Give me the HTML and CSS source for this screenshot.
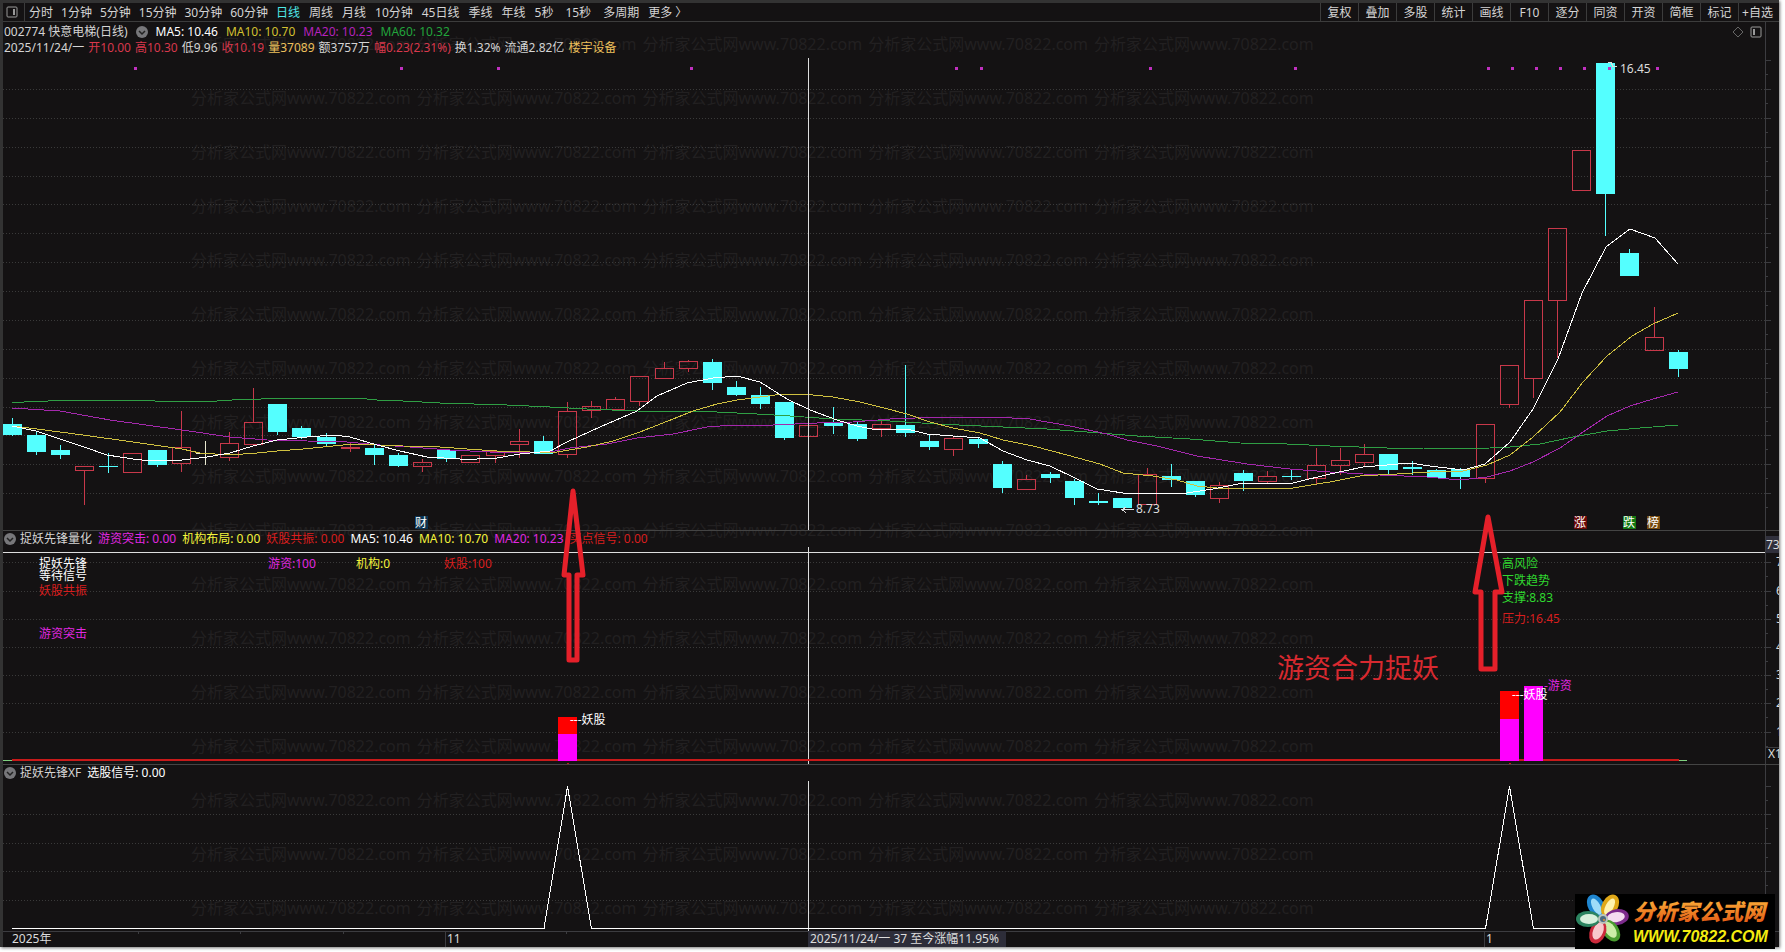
FILE: index.html
```html
<!DOCTYPE html>
<html lang="zh-CN">
<head>
  <meta charset="UTF-8">
  <meta name="viewport" content="width=device-width, initial-scale=1.0">
  <title>快意电梯 日线</title>
  <link rel="stylesheet" href="styles.css">
</head>
<body>
  <main class="app">
    <div class="watermark" aria-hidden="true"></div>

    <nav class="toolbar">
      <button class="toggle" aria-label="侧栏">
        <svg width="12" height="12" viewBox="0 0 12 12"><rect x="1" y="1" width="10" height="10" rx="1" fill="none" stroke="#999"/><rect x="7" y="3" width="2" height="6" fill="#999"/></svg>
      </button>
      <div class="periods">
        <button>分时</button>
        <button>1分钟</button>
        <button>5分钟</button>
        <button>15分钟</button>
        <button>30分钟</button>
        <button>60分钟</button>
        <button class="active">日线</button>
        <button>周线</button>
        <button>月线</button>
        <button>10分钟</button>
        <button>45日线</button>
        <button>季线</button>
        <button>年线</button>
        <button class="seconds">5秒</button>
        <button class="seconds">15秒</button>
        <button>多周期</button>
        <button>更多 〉</button>
      </div>
      <div class="tools">
        <button>复权</button>
        <button>叠加</button>
        <button>多股</button>
        <button>统计</button>
        <button>画线</button>
        <button>F10</button>
        <button>逐分</button>
        <button>同资</button>
        <button>开资</button>
        <button>简框</button>
        <button>标记</button>
        <button>+自选</button>
      </div>
    </nav>

    <section class="panel">
      <header class="head head-main">
        <div class="row">
          <span>002774 快意电梯(日线)</span>
          <button class="fold" aria-label="展开"><svg width="12" height="12" viewBox="0 0 12 12"><circle cx="6" cy="6" r="6" fill="#77777a"/><path d="M3 5l3 3 3-3" fill="none" stroke="#222" stroke-width="1.5"/></svg></button>
          <span class="white">MA5: 10.46</span>
          <span class="gold">MA10: 10.70</span>
          <span class="purple">MA20: 10.23</span>
          <span class="green">MA60: 10.32</span>
          <span class="corner">
            <svg width="12" height="12" viewBox="0 0 12 12"><path d="M6 1l5 5-5 5-5-5z" fill="none" stroke="#666"/></svg>
            <svg width="12" height="12" viewBox="0 0 12 12"><rect x="1" y="1" width="10" height="10" rx="1" fill="none" stroke="#999"/><rect x="3" y="3" width="2" height="6" fill="#999"/></svg>
          </span>
        </div>
        <div class="row quote">
          <span>2025/11/24/一</span>
          <span class="up">开10.00</span>
          <span class="up">高10.30</span>
          <span>低9.96</span>
          <span class="up">收10.19</span>
          <span class="amber">量37089</span>
          <span>额3757万</span>
          <span class="up">幅0.23(2.31%)</span>
          <span>换1.32%</span>
          <span>流通2.82亿</span>
          <span class="amber">楼宇设备</span>
        </div>
      </header>
      <svg class="plot" viewBox="3 56 1776 474">
        <g id="grid1"></g>
        <g id="candles"></g>
        <g id="lines"></g>
        <g id="dots"></g>
        <path class="cross" d="M808.5 58V530"/>
        <path class="mark" d="M1608 62.5H1611L1613 66.5H1617"/>
        <text x="1620" y="73">16.45</text>
        <path class="mark" d="M1134 509.5H1122M1126 512.5L1122 509.5L1126 507"/>
        <text x="1136" y="513">8.73</text>
        <g class="tags">
          <rect x="415" y="516" width="13" height="13" fill="#0b3352"/>
          <text x="415" y="527" fill="#c8ecff">财</text>
          <rect x="1574" y="516" width="13" height="13" fill="#6a0808"/>
          <text x="1574" y="527">涨</text>
          <rect x="1623" y="516" width="13" height="13" fill="#127812"/>
          <text x="1623" y="527">跌</text>
          <rect x="1647" y="516" width="13" height="13" fill="#74480c"/>
          <text x="1647" y="527">榜</text>
        </g>
      </svg>
    </section>

    <section class="panel front">
      <header class="head row">
        <button class="fold" aria-label="展开"><svg width="12" height="12" viewBox="0 0 12 12"><circle cx="6" cy="6" r="6" fill="#77777a"/><path d="M3 5l3 3 3-3" fill="none" stroke="#222" stroke-width="1.5"/></svg></button>
        <span class="name">捉妖先锋量化</span>
        <span class="magenta">游资突击: 0.00</span>
        <span class="yellow">机构布局: 0.00</span>
        <span class="red">妖股共振: 0.00</span>
        <span class="white">MA5: 10.46</span>
        <span class="yellow">MA10: 10.70</span>
        <span class="magenta">MA20: 10.23</span>
        <span class="red">买点信号: 0.00</span>
      </header>
      <svg class="plot" viewBox="3 547 1776 217">
        <g id="grid2"></g>
        <path class="cross" d="M808.5 547V764M3 552.5H1765"/>

        <rect x="1766" y="536" width="13" height="17" fill="#30303c"/>
        <text x="1766" y="549">73</text>
        <g id="scale"></g>
        <path class="axis" d="M1765 747.5H1779"/>
        <text x="1768" y="758">X1</text>

        <path d="M3 760.5H12M1679 760.5H1687" stroke="#7fd07f"/>
        <path d="M12 760H1679" stroke="#c81a1a" stroke-width="2"/>
        <path d="M567 763.5h2M1509 763.5h2" stroke="#c01a1a"/>
        <rect x="558" y="717" width="19" height="17" fill="#f00"/>
        <rect x="558" y="734" width="19" height="27" fill="#f0f"/>
        <rect x="1500" y="691" width="19" height="28" fill="#f00"/>
        <rect x="1500" y="719" width="19" height="42" fill="#f0f"/>
        <rect x="1524" y="686" width="19" height="75" fill="#f0f"/>

        <g class="signal">
          <text x="39" y="568">捉妖先锋</text>
          <text x="39" y="580">等待信号</text>
          <text class="red" x="39" y="595">妖股共振</text>
          <text class="magenta" x="39" y="638">游资突击</text>
          <text class="magenta" x="268" y="568">游资:100</text>
          <text class="yellow" x="356" y="568">机构:0</text>
          <text class="red" x="444" y="568">妖股:100</text>
          <text x="570" y="724">---妖股</text>
          <text class="magenta" x="1544" y="690">-游资</text>
          <text x="1512" y="699">---妖股</text>
          <text class="lime" x="1502" y="568">高风险</text>
          <text class="lime" x="1502" y="585">下跌趋势</text>
          <text class="lime" x="1502" y="602">支撑:8.83</text>
          <text class="red" x="1502" y="623">压力:16.45</text>
        </g>
        <text class="note" x="1277" y="678">游资合力捉妖</text>
        <path class="arrow" d="M573 491L564 575H569V660H577V575H583Z"/>
        <path class="arrow" d="M1488 517L1475 592H1481V669H1495V592H1502Z"/>
      </svg>
    </section>

    <section class="panel last">
      <header class="head row">
        <button class="fold" aria-label="展开"><svg width="12" height="12" viewBox="0 0 12 12"><circle cx="6" cy="6" r="6" fill="#77777a"/><path d="M3 5l3 3 3-3" fill="none" stroke="#222" stroke-width="1.5"/></svg></button>
        <span class="name">捉妖先锋XF</span>
        <span class="white">选股信号: 0.00</span>
      </header>
      <svg class="plot" viewBox="3 781 1776 150">
        <g id="grid3"></g>
        <path class="cross" d="M808.5 781V931"/>
        <path d="M12 928.5H544L567.5 786.5L591.5 928.5H1485.5L1509.5 786.5L1533.5 928.5H1679" fill="none" stroke="#fff"/>
      </svg>
    </section>

    <svg class="plot timeline" viewBox="3 931 1776 16">
      <path class="axis" d="M3 931.5H1779M138.5 931V934M240.5 931V934M343.5 931V934M566.5 931V934M445.5 931V947M1484.5 931V947"/>
      <text x="12" y="943">2025年</text>
      <text x="447" y="943">11</text>
      <rect x="808" y="931" width="198" height="16" fill="#2d2d39"/>
      <text x="810" y="943">2025/11/24/一 37 至今涨幅11.95%</text>
      <text x="1486" y="943">1</text>
    </svg>

    <a class="logo" href="#" aria-label="分析家公式网">
      <svg width="200" height="55" viewBox="0 0 200 55">
        <defs>
          <linearGradient id="fire" x1="0" y1="0" x2="0" y2="1">
            <stop offset="0" stop-color="#ffc040"/>
            <stop offset="1" stop-color="#e05010"/>
          </linearGradient>
        </defs>
        <g transform="translate(28 25)">
          <g transform="rotate(-28)"><ellipse cy="-15" rx="8" ry="12" fill="#1f86d0"/><ellipse cy="-14" rx="4" ry="9" fill="#9fdcf8"/></g>
          <g transform="rotate(28)"><ellipse cy="-15" rx="8" ry="12" fill="#e0a818"/><ellipse cy="-14" rx="4" ry="9" fill="#fff3b0"/></g>
          <g transform="rotate(82)"><ellipse cy="-14" rx="8" ry="12" fill="#7c2a8c"/><ellipse cy="-13" rx="5" ry="9" fill="#f4dcf0"/></g>
          <g transform="rotate(146)"><ellipse cy="-14" rx="8" ry="12" fill="#4a9c30"/><ellipse cy="-13" rx="5" ry="9" fill="#cdeea8"/></g>
          <g transform="rotate(202)"><ellipse cy="-14" rx="8" ry="12" fill="#cc2a3c"/><ellipse cy="-13" rx="5" ry="9" fill="#f8c8cc"/></g>
          <g transform="rotate(270)"><ellipse cy="-15" rx="8" ry="12" fill="#2c8460"/><ellipse cy="-14" rx="5" ry="9" fill="#d8f0dc"/></g>
          <circle r="5" fill="#b8c4bc"/>
          <circle r="3" fill="#4c6a80"/>
          <circle cx="1" cy="1" r="1" fill="#e09030"/>
        </g>
        <text class="logo-name" x="58" y="26" fill="url(#fire)">分析家公式网</text>
        <text class="logo-url" x="58" y="48">WWW.70822.COM</text>
      </svg>
    </a>
  </main>
  <script src="chart.js"></script>
</body>
</html>
```

FILE: styles.css
```css
body {
  margin: 0;
  background: #fff;
  font-family: "Noto Sans", "Noto Sans CJK SC", sans-serif;
  font-size: 12px;
  line-height: 16px;
  color: #d4d4d4;
}

button {
  padding: 0;
  border: 0;
  background: none;
  color: inherit;
  font: inherit;
  white-space: nowrap;
}

.app {
  position: relative;
  margin: 0 6px 5px 0;
  border-top: 3px solid #333;
  border-left: 3px solid #333;
  background: #141213;
  box-shadow: 1px 1px 3px #777;
}

.watermark {
  position: absolute;
  inset: 14px 0 0 188px;
  overflow: hidden;
  font-size: 16px;
  line-height: 54px;
  color: #222021;
  pointer-events: none;
}

.watermark div {
  display: flex;
  gap: 6px;
}

/* toolbar */
.toolbar {
  position: relative;
  display: flex;
  height: 18px;
  border-bottom: 1px solid #3c3c3c;
  background: #141213;
}

.toolbar button {
  line-height: 15px;
}

.toggle {
  display: flex;
  align-items: center;
  padding: 0 6px 0 3px;
  border-right: 1px solid #3c3c3c;
}

.periods {
  display: flex;
  gap: 8px;
  padding-left: 4px;
}

.periods .active {
  color: #4fe8e8;
}

.periods .active ~ button {
  padding-left: 1px;
}

.periods .seconds {
  padding-right: 3px;
}

.tools {
  display: flex;
  margin-left: auto;
  padding-right: 3px;
}

.tools button {
  width: 38px;
  border-left: 1px solid #3c3c3c;
}

/* panels */
.panel {
  position: relative;
  border-bottom: 1px solid #444;
}

.front {
  z-index: 1;
}

.last {
  border-bottom: 0;
}

.head {
  position: relative;
  padding-left: 1px;
}

.head-main {
  padding-top: 2px;
}

.row {
  display: flex;
  gap: 6px;
  height: 16px;
  white-space: nowrap;
}

.head-main .row {
  gap: 8px;
}

.head-main .quote {
  gap: 4px;
}

.name {
  margin-left: -2px;
}

.fold {
  display: flex;
  align-items: center;
}

.corner {
  display: flex;
  align-items: center;
  gap: 6px;
  margin-left: auto;
  padding-right: 17px;
}

.plot {
  display: block;
  position: relative;
  width: 100%;
  height: auto;
  overflow: visible;
  shape-rendering: crispEdges;
}

.front .plot {
  clip-path: inset(-70px 0 0 0);
}

.plot text {
  fill: #dcdcdc;
}

.tags text {
  fill: #fff;
}

.plot .signal text {
  fill: #fff;
}

.plot .note {
  font-size: 27px;
  fill: #d8292f;
}

.arrow {
  fill: none;
  stroke: #e5202a;
  stroke-width: 5;
  stroke-linejoin: round;
  shape-rendering: auto;
}

.cross {
  fill: none;
  stroke: #dedede;
}

.mark {
  fill: none;
  stroke: #dedede;
}

.axis {
  fill: none;
  stroke: #3c3c40;
}

.grid {
  stroke: #3a3a3a;
  stroke-dasharray: 1 2;
}

.line {
  fill: none;
}

/* text colours */
.white { color: #fff; }
.gold { color: #d2c030; }
.purple { color: #b422bc; }
.green { color: #22a43c; }
.up { color: #d8384c; }
.amber { color: #ecc05c; }
.yellow { color: #f4f43c; }
.magenta { color: #e028e0; }
.red { color: #d81e1e; }
.plot .signal .yellow { fill: #f4f43c; }
.plot .signal .magenta { fill: #e028e0; }
.plot .signal .red { fill: #d81e1e; }
.plot .signal .lime { fill: #30d830; }

.logo {
  position: absolute;
  right: 4px;
  bottom: -2px;
  z-index: 2;
  display: flex;
  background: #000;
}

.logo-name {
  font-family: "Noto Sans CJK SC", sans-serif;
  font-size: 22px;
  font-weight: 900;
  font-style: italic;
}

.logo-url {
  font-family: "Liberation Sans", sans-serif;
  font-size: 16px;
  font-weight: bold;
  font-style: italic;
  fill: #f4ec10;
}
```

FILE: chart.js
```js
const UP = '#c8384a'
const DOWN = '#54ffff'

// type, high, body top, body bottom, low
const candles = [
  ['d', 418, 424, 435, 436], ['d', 431, 435, 452, 455], ['d', 445, 450, 455, 459],
  ['u', 466, 466, 471, 505], ['d', 453, 466, 467, 473], ['u', 453, 453, 473, 473],
  ['d', 450, 450, 465, 467], ['u', 411, 447, 464, 472], ['w', 441, 453, 454, 465],
  ['u', 432, 443, 458, 461], ['u', 388, 422, 445, 445], ['d', 404, 404, 432, 435],
  ['d', 426, 428, 437, 439], ['d', 433, 437, 444, 446], ['u', 442, 447, 449, 452],
  ['d', 445, 448, 455, 465], ['d', 453, 455, 466, 467], ['u', 459, 462, 467, 472],
  ['d', 449, 450, 459, 462], ['u', 455, 455, 463, 463], ['u', 451, 451, 456, 463],
  ['u', 429, 441, 445, 458], ['d', 436, 441, 454, 454], ['u', 402, 411, 455, 458],
  ['u', 401, 406, 411, 418], ['u', 397, 399, 410, 410], ['u', 376, 376, 402, 406],
  ['u', 362, 368, 379, 379], ['u', 360, 361, 369, 372], ['d', 359, 362, 383, 390],
  ['d', 381, 387, 395, 396], ['d', 387, 395, 404, 409], ['d', 402, 402, 438, 440],
  ['u', 420, 425, 437, 438], ['d', 407, 423, 426, 434], ['d', 422, 424, 439, 441],
  ['u', 421, 424, 429, 437], ['d', 365, 425, 433, 437], ['d', 434, 441, 447, 450],
  ['u', 436, 438, 450, 456], ['d', 438, 439, 444, 448], ['d', 461, 464, 488, 493],
  ['u', 475, 479, 490, 490], ['d', 472, 474, 478, 483], ['d', 479, 481, 498, 505],
  ['d', 493, 501, 503, 505], ['d', 498, 498, 508, 508], ['u', 468, 474, 505, 505],
  ['d', 464, 476, 480, 487], ['d', 481, 481, 495, 497], ['u', 482, 485, 499, 503],
  ['d', 470, 473, 481, 491], ['u', 471, 476, 482, 484], ['d', 470, 476, 477, 480],
  ['u', 448, 465, 479, 484], ['u', 448, 460, 466, 475], ['u', 444, 454, 463, 466],
  ['d', 454, 454, 470, 474], ['d', 461, 467, 469, 475], ['d', 469, 470, 478, 478],
  ['d', 468, 469, 477, 489], ['u', 424, 424, 479, 483], ['u', 365, 365, 405, 408],
  ['u', 300, 300, 379, 398], ['u', 228, 228, 301, 358], ['u', 150, 150, 191, 191],
  ['d', 63, 63, 194, 236], ['d', 249, 253, 276, 276], ['u', 307, 337, 351, 351],
  ['d', 350, 352, 369, 377]
]

const lines = [
  ['#2f9e44', '12,403 24,402 48,401 72,400 145,400 155,401 217,401 232,400 290,398 357,398 377,400 403,401 440,403 507,405 550,407 587,409 637,411 717,412 757,414 790,416 833,419 890,421 937,424 1003,427 1047,429 1087,432 1137,436 1190,439 1240,443 1287,444 1330,446 1387,448 1423,448 1457,449 1490,448 1510,447 1540,444 1573,437 1607,431 1640,428 1678,425'],
  ['#a428ac', '12,408 60,411 110,420 182,430 230,437 267,440 307,441 347,442 380,445 410,447 450,450 490,452 550,452 570,448 607,444 637,438 673,434 707,427 733,425 773,425 817,423 853,422 890,419 940,417 993,417 1030,419 1070,426 1107,434 1127,440 1157,446 1197,456 1247,464 1290,469 1330,472 1380,475 1427,477 1460,480 1487,477 1510,471 1533,462 1560,448 1583,432 1607,416 1630,406 1653,399 1678,392'],
  ['#cfc040', '12,426 37,429 83,435 133,442 182,449 200,453 230,455 257,453 277,451 303,449 323,447 353,444 377,445 403,446 440,447 467,449 497,451 530,452 557,452 587,447 613,441 640,432 673,419 693,411 717,404 737,400 760,397 783,394 813,395 833,397 860,402 880,407 907,414 930,422 953,428 980,433 1003,440 1033,446 1067,455 1100,464 1123,473 1153,476 1177,480 1197,486 1227,489 1247,488 1293,488 1317,484 1330,482 1360,476 1397,474 1430,472 1463,471 1487,465 1510,455 1533,437 1560,412 1583,382 1607,356 1632,336 1653,324 1678,313'],
  ['#fff', '12,426 36,431 60,439 84,447 107,455 133,459 150,461 182,460 207,457 230,453 253,446 277,440 307,437 333,435 350,437 377,445 400,451 427,457 460,459 477,459 497,458 520,454 550,451 567,442 600,427 637,411 657,396 687,383 713,378 737,376 760,382 787,399 810,410 837,420 857,426 877,430 907,429 927,434 953,436 980,438 1003,451 1027,460 1050,466 1077,479 1097,489 1123,493 1147,493 1180,494 1213,489 1243,483 1293,483 1330,474 1363,467 1387,465 1410,463 1430,466 1463,470 1485,464 1510,442 1533,409 1558,359 1582,293 1606,247 1630,229 1655,238 1678,264']
]

const dots = [135, 401, 498, 691, 956, 981, 1150, 1295, 1488, 1512, 1536, 1560, 1584, 1609, 1657]

const get = id => document.getElementById(id)

get('candles').innerHTML = candles.map(([type, high, top, bottom, low], i) => {
  const x = Math.floor(12.2 + 24.145 * i)
  const color = type === 'u' ? UP : type === 'd' ? DOWN : '#e8e8d0'
  const wick = `<path d="M${x + 0.5} ${high}V${top}M${x + 0.5} ${bottom}V${low}" stroke="${color}"/>`
  const body = type === 'u'
    ? `<rect x="${x - 8.5}" y="${top + 0.5}" width="18" height="${bottom - top - 1}" fill="none" stroke="${color}"/>`
    : `<rect x="${x - 9}" y="${top}" width="19" height="${bottom - top}" fill="${color}"/>`
  return wick + body
}).join('')

get('lines').innerHTML = lines.map(([color, points]) =>
  `<polyline class="line" points="${points}" stroke="${color}"/>`
).join('')

get('dots').innerHTML = dots.map(x =>
  `<rect x="${x - 1}" y="67" width="3" height="3" fill="#c030c0"/>`
).join('')

// dotted rows, the vertical axis and its ticks
const drawGrid = (id, rows, from, to, first) => {
  let html = `<path class="axis" d="M1765.5 ${from}V${to}"/>`
  rows.forEach(y => {
    html += `<path class="grid" d="M3 ${y + 0.5}H1765"/>`
  })
  const majors = first ? [first, ...rows] : rows
  majors.forEach(y => {
    html += `<path class="axis" d="M1765 ${y + 0.5}H1771M1765 ${y + 14.5}H1768"/>`
  })
  get(id).innerHTML = html
}

const rows1 = Array.from({ length: 15 }, (_, i) => Math.round(89 + 28.87 * i))
const rows2 = [562, 591, 619, 647, 675, 703, 732]
drawGrid('grid1', rows1, 22, 530, 60)
drawGrid('grid2', rows2, 531, 764)
drawGrid('grid3', [814, 843, 871, 900], 765, 931, 786)

get('scale').innerHTML = rows2.map((y, i) =>
  `<text x="1776" y="${y + 4}">${7 - i}</text>`
).join('')

const mark = '<span>分析家公式网www.70822.com</span>'
document.querySelector('.watermark').innerHTML = `<div>${mark.repeat(5)}</div>`.repeat(17)
```
